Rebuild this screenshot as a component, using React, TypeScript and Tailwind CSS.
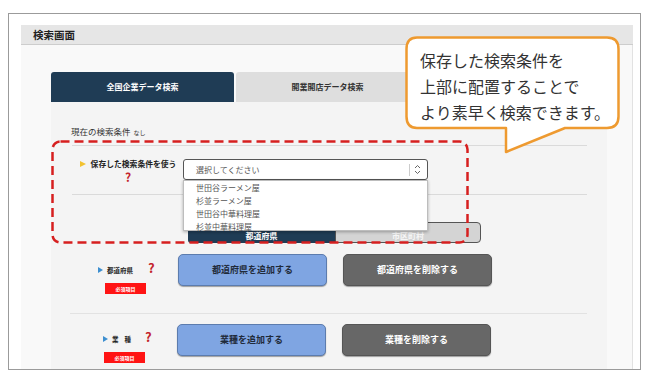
function SelectArrows() {
  return (
    <svg width="7" height="11" viewBox="0 0 7 11" fill="none" stroke="#666" strokeWidth="1">
      <path d="M1 4 L3.5 1.5 L6 4" />
      <path d="M1 7 L3.5 9.5 L6 7" />
    </svg>
  );
}

function RowLabel({ label, badgeOffset, gap }: { label: React.ReactNode; badgeOffset: string; gap: string }) {
  return (
    <div className="flex flex-col items-start">
      <div className={`flex items-center h-[12px] ${gap}`}>
        <div className="flex items-center gap-[4px]">
          <span className="w-0 h-0 border-y-[3.5px] border-y-transparent border-l-[5px] border-l-[#3d8fd0]" />
          <span className="text-[6.5px] font-bold text-[#222] leading-[12px]">{label}</span>
        </div>
        <span className="text-[13px] font-bold text-[#c3242b] leading-[12px] -mt-[4px]">?</span>
      </div>
      <div className={`${badgeOffset} mt-[7px] w-[41px] h-[11px] bg-[#ff1414] flex items-center justify-center`}>
        <span className="text-[5px] font-bold text-white leading-none">必須項目</span>
      </div>
    </div>
  );
}

function ButtonPair({ addText, delText }: { addText: string; delText: string }) {
  return (
    <div className="flex">
      <button className="w-[149px] h-[32px] rounded-[5px] bg-[#7fa5e2] border border-[#5c7cae] shadow-[0_1px_1px_rgba(0,0,0,0.35)] text-[9px] font-bold text-[#1f2b3a]">
        {addText}
      </button>
      <button className="ml-[16px] w-[149px] h-[32px] rounded-[5px] bg-[#676767] border border-[#555] shadow-[0_1px_1px_rgba(0,0,0,0.35)] text-[9px] font-bold text-white">
        {delText}
      </button>
    </div>
  );
}

export default function App() {
  const saved = ["世田谷ラーメン屋", "杉並ラーメン屋", "世田谷中華料理屋", "杉並中華料理屋"];

  return (
    <div className="relative w-[650px] h-[381px] bg-white pt-[13px] pl-[8px] font-['Noto_Sans_CJK_JP',sans-serif]">
      <div className="w-[633px] h-[357px] border border-[#9b9b9b] bg-white overflow-hidden pt-[11px] pl-[12px] pr-[7px] flex flex-col">
        <div className="h-[20px] shrink-0 bg-[#e6e6e6] border-b border-[#cdcdcd] pl-[12px] text-[10.5px] font-bold text-[#222] leading-[19px]">
          検索画面
        </div>

        <div className="flex-1 bg-[#f9f9f9] border-r border-[#e2e2e2] pt-[27px] pl-[30px]">
          <div className="w-[556px]">
            {/* tabs */}
            <div className="flex gap-[2px] h-[30px]">
              <div className="w-[183px] bg-[#1f3c55] rounded-t-[3px] flex items-center justify-center text-[8px] font-bold text-white">
                全国企業データ検索
              </div>
              <div className="w-[183px] bg-[#dedede] rounded-t-[3px] flex items-center justify-center text-[8px] font-bold text-[#333]">
                開業開店データ検索
              </div>
            </div>

            <div className="bg-[#f4f4f4] h-[300px]">
              <div className="h-[43px] pt-[20px] pl-[20px] leading-[12px] text-[#333]">
                <span className="text-[8.5px]">現在の検索条件</span>
                <span className="text-[6px] ml-[3px]">なし</span>
              </div>
              <div className="ml-[21px] w-[515px] h-px bg-[#dadada]" />

              {/* saved conditions */}
              <div className="h-[48px] flex items-start pt-[13px] pl-[26px]">
                <div className="w-[106px] flex flex-col items-center pr-[4px] -mt-[1px]">
                  <div className="flex items-center gap-[5px] h-[12px]">
                    <span className="w-0 h-0 border-y-[3.5px] border-y-transparent border-l-[6px] border-l-[#f2c230]" />
                    <span className="text-[7.8px] font-bold text-[#222] leading-[12px]">保存した検索条件を使う</span>
                  </div>
                  <span className="mt-[1px] text-[12px] font-bold text-[#c3242b] leading-[12px]">?</span>
                </div>
                <div className="relative w-[245px] h-[21px] bg-white border border-[#555] rounded-[3px] flex items-center pl-[12px]">
                  <span className="text-[8px] text-[#555] flex-1">選択してください</span>
                  <span className="w-px h-[12px] bg-[#ccc] mr-[4px]" />
                  <span className="mr-[6px] flex items-center">
                    <SelectArrows />
                  </span>
                  <div className="absolute top-[20px] -left-px w-[245px] h-[51px] bg-white border border-[#bdbdbd] shadow-[0_1px_3px_rgba(0,0,0,0.3)] z-10 pl-[12px]">
                    {saved.map((s) => (
                      <div key={s} className="text-[8px] text-[#555] leading-[13px]">
                        {s}
                      </div>
                    ))}
                  </div>
                </div>
              </div>
              <div className="ml-[21px] w-[515px] h-px bg-[#dadada]" />

              {/* toggle */}
              <div className="h-[59px] pt-[27px] pl-[137px]">
                <div className="flex h-[21px] w-[293px]">
                  <div className="w-[147px] bg-[#1f3c55] rounded-l-[3px] flex items-end justify-center pb-[2px] text-[8px] leading-[10px] font-bold text-white">
                    都道府県
                  </div>
                  <div className="w-[146px] bg-[#d4d4d4] border border-[#555] rounded-r-[4px] flex items-end justify-center pb-[1px] text-[8px] leading-[10px] font-bold text-white/80">
                    市区町村
                  </div>
                </div>
              </div>

              {/* prefecture row */}
              <div className="h-[59px] flex items-start">
                <div className="w-[127px] pl-[47px] pt-[10px]">
                  <RowLabel label="都道府県" badgeOffset="ml-[7px]" gap="gap-[15px]" />
                </div>
                <ButtonPair addText="都道府県を追加する" delText="都道府県を削除する" />
              </div>
              <div className="ml-[19px] w-[517px] h-px bg-[#e2e2e2]" />

              {/* industry row */}
              <div className="flex items-start">
                <div className="w-[126px] pl-[52px] pt-[19px]">
                  <RowLabel
                    label={
                      <span className="flex gap-[6px]">
                        <span>業</span>
                        <span>種</span>
                      </span>
                    }
                    badgeOffset="ml-[1px]"
                    gap="gap-[14px]"
                  />
                </div>
                <div className="pt-[10px]">
                  <ButtonPair addText="業種を追加する" delText="業種を削除する" />
                </div>
              </div>
            </div>
          </div>
        </div>
      </div>

      {/* red dashed highlight */}
      <svg className="absolute left-[51px] top-[140px]" width="418" height="104" viewBox="0 0 418 104" fill="none">
        <rect x="1.5" y="1.5" width="415" height="101" rx="8" stroke="#d61f1f" strokeWidth="2.5" strokeDasharray="9 5" />
      </svg>

      {/* callout */}
      <svg className="absolute left-[405px] top-[36px]" width="216" height="118" viewBox="0 0 216 118" fill="none">
        <path
          d="M12 1.5 H202 Q213.5 1.5 213.5 13 V80.5 Q213.5 92 202 92 H160 L101 116 V92 H12 Q1.5 92 1.5 80.5 V13 Q1.5 1.5 12 1.5 Z"
          fill="white"
          stroke="#ee9a30"
          strokeWidth="2.5"
          strokeLinejoin="round"
        />
      </svg>
      <div className="absolute left-[420px] top-[47px] text-[16px] leading-[26px] text-[#333] whitespace-nowrap">
        保存した検索条件を
        <br />
        上部に配置することで
        <br />
        より素早く検索できます。
      </div>
    </div>
  );
}
